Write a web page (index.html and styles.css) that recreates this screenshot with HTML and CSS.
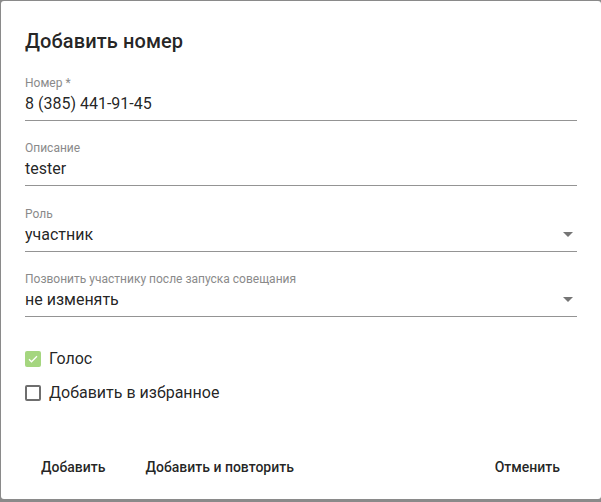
FILE: index.html
```html
<!DOCTYPE html>
<html lang="ru">
<head>
<meta charset="utf-8">
<link rel="stylesheet" href="styles.css">
</head>
<body>
<div class="dialog">
  <h1 class="title">Добавить номер</h1>
  <div class="field">
    <div class="label">Номер *</div>
    <div class="value">8 (385) 441-91-45</div>
  </div>
  <div class="field">
    <div class="label">Описание</div>
    <div class="value">tester</div>
  </div>
  <div class="field select">
    <div class="label">Роль</div>
    <div class="value">участник<span class="arrow"></span></div>
  </div>
  <div class="field select">
    <div class="label">Позвонить участнику после запуска совещания</div>
    <div class="value">не изменять<span class="arrow"></span></div>
  </div>
  <div class="checks">
    <label class="check">
      <span class="box checked"><svg width="12" height="12" viewBox="0 0 24 24"><path d="M4 12.5l5 5L20 6.5" fill="none" stroke="#fff" stroke-width="2.6"/></svg></span>
      <span>Голос</span>
    </label>
    <label class="check">
      <span class="box"></span>
      <span>Добавить в избранное</span>
    </label>
  </div>
  <div class="actions">
    <button class="btn">Добавить</button>
    <button class="btn">Добавить и повторить</button>
    <span class="spacer"></span>
    <button class="btn">Отменить</button>
  </div>
</div>
</body>
</html>
```

FILE: styles.css
```css
html, body {
  margin: 0;
  padding: 0;
  height: 100%;
  overflow: hidden;
}
body {
  background: #8a8a8a;
  font-family: Roboto, "Noto Sans", sans-serif;
  color: rgba(0, 0, 0, 0.87);
}
.dialog {
  box-sizing: border-box;
  margin: 1px 0 0 1px;
  width: 600px;
  height: 498px;
  background: #fff;
  border-radius: 3px;
  padding: 24px 24px 0 24px;
  display: flex;
  flex-direction: column;
}
.title {
  margin: 0 0 18px 0;
  font-size: 20px;
  font-weight: 500;
  line-height: 32px;
  letter-spacing: 0.1px;
}
.field {
  border-bottom: 1px solid #949494;
  padding-bottom: 6px;
  margin-bottom: 19.33px;
}
.label {
  font-size: 12px;
  line-height: 14px;
  color: #8a8a8a;
  margin: 1px 0 4px 0;
}
.value {
  font-size: 16px;
  line-height: 20px;
  display: flex;
  align-items: center;
}
.arrow {
  margin-left: auto;
  margin-right: 4px;
  width: 0;
  height: 0;
  border-left: 5px solid transparent;
  border-right: 5px solid transparent;
  border-top: 5px solid #757575;
}
.checks {
  margin-top: 12.67px;
  display: flex;
  flex-direction: column;
  gap: 14px;
}
.check {
  display: flex;
  align-items: center;
  gap: 8px;
  font-size: 16px;
  line-height: 20px;
}
.box {
  box-sizing: border-box;
  width: 16px;
  height: 16px;
  border: 2px solid #6e6e6e;
  border-radius: 2px;
  display: flex;
  align-items: center;
  justify-content: center;
}
.box.checked {
  background: #a5d67f;
  border: none;
}
.actions {
  margin-top: 46px;
  display: flex;
  align-items: center;
  gap: 8px;
}
.spacer {
  flex: 1;
}
.btn {
  font-family: Roboto, "Noto Sans", sans-serif;
  font-size: 14px;
  font-weight: 500;
  color: rgba(0, 0, 0, 0.87);
  background: transparent;
  border: none;
  height: 36px;
  padding: 0 16px;
  line-height: 36px;
  border-radius: 4px;
}
.btn:last-child {
  margin-right: 1px;
}
```
